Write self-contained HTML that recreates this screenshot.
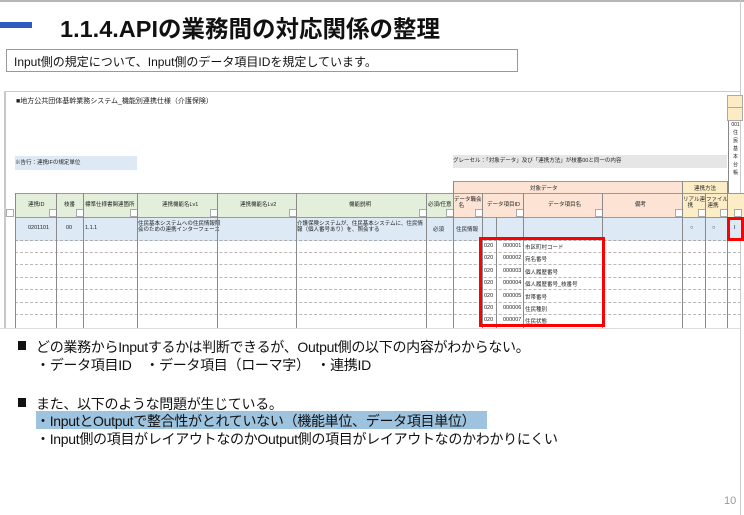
<!DOCTYPE html>
<html><head><meta charset="utf-8"><style>
body{margin:0;width:744px;height:515px;overflow:hidden;background:#fff;font-family:"Liberation Sans","Noto Sans CJK JP",sans-serif;position:relative}
.a{position:absolute}
.s{font-size:5.5px;color:#222;white-space:nowrap}
.vl{position:absolute;width:1px;background:#8a8a8a}
.hl{position:absolute;height:0;border-top:1px dashed #b8b8b8}
.t{position:absolute;font-size:14px;color:#111;white-space:nowrap;left:36px;letter-spacing:-0.3px}
.dd{position:absolute;width:6px;height:6px;border:1px solid #aaa;background:#fff}
</style></head><body>
<div class="a" style="left:0;top:0;width:744px;height:2px;background:#b5b5b5"></div>
<div class="a" style="left:0;top:22px;width:32px;height:6px;background:#2e5bbd"></div>
<div class="a" style="left:60px;top:10px;font-size:23.5px;font-weight:bold;color:#111;white-space:nowrap">1.1.4.APIの業務間の対応関係の整理</div>
<div class="a" style="left:6px;top:49px;width:510px;height:21px;border:1px solid #999"></div>
<div class="a" style="left:14px;top:53px;font-size:12px;color:#111;white-space:nowrap">Input側の規定について、Input側のデータ項目IDを規定しています。</div>

<!-- spreadsheet -->
<div class="a" style="left:4px;top:92px;width:2px;height:236px;background:#c8c8c8"></div>
<div class="a" style="left:4px;top:91px;width:736px;height:1px;background:#ccc"></div>
<div class="a" style="left:740px;top:0;width:1px;height:515px;background:#ccc"></div>
<div class="a s" style="left:16px;top:96px;font-size:7px">■地方公共団体基幹業務システム_機能別連携仕様（介護保険）</div>
<div class="a s" style="left:15px;top:156px;width:122px;height:14px;background:#dde9f5;line-height:14px">※告行：連携IFの規定単位</div>
<div class="a s" style="left:453px;top:155px;width:274px;height:13px;background:#e6e6e6;line-height:13px">グレーセル：「対象データ」及び「連携方法」が枝番00と同一の内容</div>

<div class="a" style="left:727px;top:95px;width:14px;height:12px;background:#fdebc5;border:1px solid #aaa"></div>
<div class="a" style="left:727px;top:107px;width:14px;height:12px;background:#fdebc5;border:1px solid #aaa"></div>
<div class="a s" style="left:728px;top:121px;width:13px;height:96px;border-left:1px solid #888;font-size:5px;text-align:center;line-height:8px">001<br>住<br>民<br>基<br>本<br>台<br>帳</div>

<!-- headers -->
<div class="a" style="left:453px;top:181px;width:229px;height:12px;background:#fce3d4;border-top:1px solid #999"></div>
<div class="a s" style="left:530px;top:184px">対象データ</div>
<div class="a" style="left:682px;top:181px;width:45px;height:12px;background:#fdedc6;border-top:1px solid #999"></div>
<div class="a s" style="left:694px;top:184px">連携方法</div>
<div class="a" style="left:15px;top:193px;width:438px;height:24px;background:#e3efda;border-top:1px solid #999"></div>
<div class="a" style="left:453px;top:193px;width:229px;height:24px;background:#fce3d4;border-top:1px solid #999"></div>
<div class="a" style="left:682px;top:193px;width:62px;height:24px;background:#fdedc6;border-top:1px solid #999"></div>
<div class="a s" style="left:28px;top:200px">連携ID</div>
<div class="a s" style="left:64px;top:200px">枝番</div>
<div class="a s" style="left:85px;top:200px">標準仕様書関連箇所</div>
<div class="a s" style="left:162px;top:200px">連携機能名Lv1</div>
<div class="a s" style="left:240px;top:200px">連携機能名Lv2</div>
<div class="a s" style="left:349px;top:200px">機能説明</div>
<div class="a s" style="left:428px;top:200px">必須/任意</div>
<div class="a s" style="left:454px;top:197px;line-height:6px">データ職会<br>&nbsp;&nbsp;&nbsp;名</div>
<div class="a s" style="left:487px;top:200px">データ項目ID</div>
<div class="a s" style="left:548px;top:200px">データ項目名</div>
<div class="a s" style="left:635px;top:200px">備考</div>
<div class="a s" style="left:683px;top:197px;line-height:6px">リアル連<br>&nbsp;&nbsp;&nbsp;携</div>
<div class="a s" style="left:706px;top:197px;line-height:6px">ファイル<br>&nbsp;連携</div>
<div class="dd" style="left:6px;top:209px"></div><div class="dd" style="left:49px;top:209px"></div><div class="dd" style="left:76px;top:209px"></div><div class="dd" style="left:130px;top:209px"></div><div class="dd" style="left:210px;top:209px"></div><div class="dd" style="left:289px;top:209px"></div><div class="dd" style="left:419px;top:209px"></div><div class="dd" style="left:446px;top:209px"></div><div class="dd" style="left:475px;top:209px"></div><div class="dd" style="left:516px;top:209px"></div><div class="dd" style="left:595px;top:209px"></div><div class="dd" style="left:675px;top:209px"></div><div class="dd" style="left:698px;top:209px"></div><div class="dd" style="left:720px;top:209px"></div><div class="dd" style="left:734px;top:209px"></div>

<!-- data row -->
<div class="a" style="left:15px;top:217px;width:726px;height:22px;background:#dde9f5;border-top:1px solid #999;border-bottom:1px dashed #aaa"></div>
<div class="a s" style="left:28px;top:225px">0201101</div>
<div class="a s" style="left:66px;top:225px">00</div>
<div class="a s" style="left:85px;top:225px">1.1.1</div>
<div class="a s" style="left:138px;top:221px;line-height:6px">住民基本システムへの住民情報照<br>会のための連携インターフェース</div>
<div class="a s" style="left:297px;top:221px;line-height:6px">介護保険システムが、住民基本システムに、住民情<br>報（個人番号あり）を、照会する</div>
<div class="a s" style="left:433px;top:225px">必須</div>
<div class="a s" style="left:456px;top:225px">住民情報</div>
<div class="a s" style="left:690px;top:225px">○</div>
<div class="a s" style="left:712px;top:225px">○</div>
<div class="a s" style="left:734px;top:225px">I</div>

<div class="hl" style="left:15px;top:252px;width:726px"></div>
<div class="hl" style="left:15px;top:264px;width:726px"></div>
<div class="hl" style="left:15px;top:277px;width:726px"></div>
<div class="hl" style="left:15px;top:289px;width:726px"></div>
<div class="hl" style="left:15px;top:302px;width:726px"></div>
<div class="hl" style="left:15px;top:314px;width:726px"></div>

<div class="vl" style="left:15px;top:193px;height:135px"></div>
<div class="vl" style="left:56px;top:193px;height:135px"></div>
<div class="vl" style="left:83px;top:193px;height:135px"></div>
<div class="vl" style="left:137px;top:193px;height:135px"></div>
<div class="vl" style="left:217px;top:193px;height:135px"></div>
<div class="vl" style="left:296px;top:193px;height:135px"></div>
<div class="vl" style="left:426px;top:193px;height:135px"></div>
<div class="vl" style="left:453px;top:181px;height:147px"></div>
<div class="vl" style="left:482px;top:193px;height:135px"></div>
<div class="vl" style="left:496px;top:217px;height:111px"></div>
<div class="vl" style="left:523px;top:193px;height:135px"></div>
<div class="vl" style="left:602px;top:193px;height:135px"></div>
<div class="vl" style="left:682px;top:181px;height:147px"></div>
<div class="vl" style="left:705px;top:193px;height:135px"></div>
<div class="vl" style="left:727px;top:181px;height:147px"></div>

<div class="a s" style="left:484px;top:243px">020</div><div class="a s" style="left:503px;top:243px">000001</div><div class="a s" style="left:525px;top:243px">市区町村コード</div>
<div class="a s" style="left:484px;top:255px">020</div><div class="a s" style="left:503px;top:255px">000002</div><div class="a s" style="left:525px;top:255px">宛名番号</div>
<div class="a s" style="left:484px;top:268px">020</div><div class="a s" style="left:503px;top:268px">000003</div><div class="a s" style="left:525px;top:268px">個人履歴番号</div>
<div class="a s" style="left:484px;top:280px">020</div><div class="a s" style="left:503px;top:280px">000004</div><div class="a s" style="left:525px;top:280px">個人履歴番号_枝番号</div>
<div class="a s" style="left:484px;top:293px">020</div><div class="a s" style="left:503px;top:293px">000005</div><div class="a s" style="left:525px;top:293px">世帯番号</div>
<div class="a s" style="left:484px;top:305px">020</div><div class="a s" style="left:503px;top:305px">000006</div><div class="a s" style="left:525px;top:305px">住民種別</div>
<div class="a s" style="left:484px;top:317px">020</div><div class="a s" style="left:503px;top:317px">000007</div><div class="a s" style="left:525px;top:317px">住民状態</div>

<div class="a" style="left:479px;top:237px;width:120px;height:84px;border:3px solid #f00"></div>
<div class="a" style="left:727px;top:217px;width:11px;height:18px;border:3px solid #f00"></div>
<div class="a" style="left:0;top:328px;width:740px;height:1px;background:#ddd"></div>

<!-- bottom text -->
<div class="a" style="left:18px;top:341px;width:8px;height:9px;background:#111"></div>
<div class="t" style="top:337px">どの業務からInputするかは判断できるが、Output側の以下の内容がわからない。</div>
<div class="t" style="top:355px">・データ項目ID　・データ項目（ローマ字）　・連携ID</div>
<div class="a" style="left:18px;top:398px;width:8px;height:9px;background:#111"></div>
<div class="t" style="top:394px">また、以下のような問題が生じている。</div>
<div class="a" style="left:36px;top:411px;width:451px;height:18px;background:#9ec3df"></div>
<div class="t" style="top:411px">・InputとOutputで整合性がとれていない（機能単位、データ項目単位）</div>
<div class="t" style="top:429px">・Input側の項目がレイアウトなのかOutput側の項目がレイアウトなのかわかりにくい</div>
<div class="a" style="left:724px;top:495px;font-size:11px;color:#999">10</div>
</body></html>
